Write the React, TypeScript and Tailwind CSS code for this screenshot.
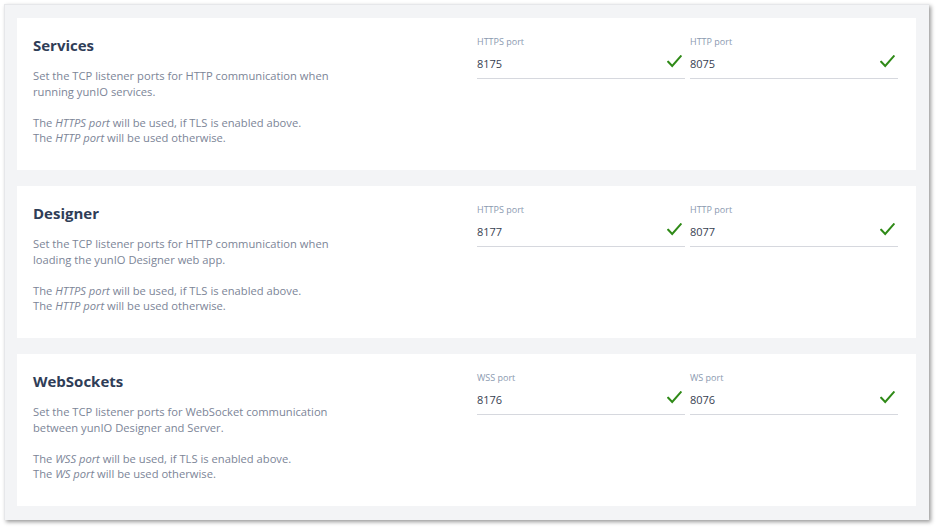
import React from "react";

type Field = { label: string; value: string };
type Section = {
  title: string;
  desc: [string, string];
  a: string;
  b: string;
  fields: [Field, Field];
};

const sections: Section[] = [
  {
    title: "Services",
    desc: ["Set the TCP listener ports for HTTP communication when", "running yunIO services."],
    a: "HTTPS port",
    b: "HTTP port",
    fields: [
      { label: "HTTPS port", value: "8175" },
      { label: "HTTP port", value: "8075" },
    ],
  },
  {
    title: "Designer",
    desc: ["Set the TCP listener ports for HTTP communication when", "loading the yunIO Designer web app."],
    a: "HTTPS port",
    b: "HTTP port",
    fields: [
      { label: "HTTPS port", value: "8177" },
      { label: "HTTP port", value: "8077" },
    ],
  },
  {
    title: "WebSockets",
    desc: ["Set the TCP listener ports for WebSocket communication", "between yunIO Designer and Server."],
    a: "WSS port",
    b: "WS port",
    fields: [
      { label: "WSS port", value: "8176" },
      { label: "WS port", value: "8076" },
    ],
  },
];

function Check() {
  return (
    <svg width="15" height="13" viewBox="0 0 15 13" fill="none">
      <path d="M1.2 6.8 L5.2 11 L13.8 1.2" stroke="#2f8a17" strokeWidth="2" strokeLinecap="square" />
    </svg>
  );
}

export default function App() {
  return (
    <div className="w-[936px] h-[529px] bg-white" style={{ fontFamily: '"Open Sans", "Noto Sans", sans-serif' }}>
      <div className="ml-[4px] mt-[4px] w-[925px] h-[516px] bg-[#f3f4f6] border-l border-t border-[#e6e7ea] shadow-[2px_2px_4px_rgba(0,0,0,0.4)] pl-[12px] pr-[13px] pt-[13px] flex flex-col gap-[16px]">
        {sections.map((s) => (
          <div key={s.title} className="bg-white h-[152px] flex pt-[17px] pl-[16px] pr-[18px]">
            <div className="w-[444px]">
              <div className="text-[15px] leading-[20px] font-bold text-[#2f3d57]">{s.title}</div>
              <div className="mt-[13px] text-[11.2px] leading-[15.5px] text-[#7c8597]">
                <div>{s.desc[0]}</div>
                <div>{s.desc[1]}</div>
              </div>
              <div className="mt-[16px] text-[11.2px] leading-[15px] text-[#7c8597]">
                <div>
                  The <i>{s.a}</i> will be used, if TLS is enabled above.
                </div>
                <div>
                  The <i>{s.b}</i> will be used otherwise.
                </div>
              </div>
            </div>
            <div className="flex-1 grid grid-cols-2 gap-[5px] h-[62px] pt-[1px]">
              {s.fields.map((f) => (
                <div key={f.label} className="flex flex-col">
                  <div className="text-[9px] leading-[12px] text-[#8b9ab0]">{f.label}</div>
                  <div className="h-[29px] mt-[2px] border-b border-[#d6d8de] flex items-center justify-between pr-[3px]">
                    <span className="text-[11px] text-[#374151] pt-[1px]">{f.value}</span>
                    <span className="-mt-[5px]"><Check /></span>
                  </div>
                </div>
              ))}
            </div>
          </div>
        ))}
      </div>
    </div>
  );
}
